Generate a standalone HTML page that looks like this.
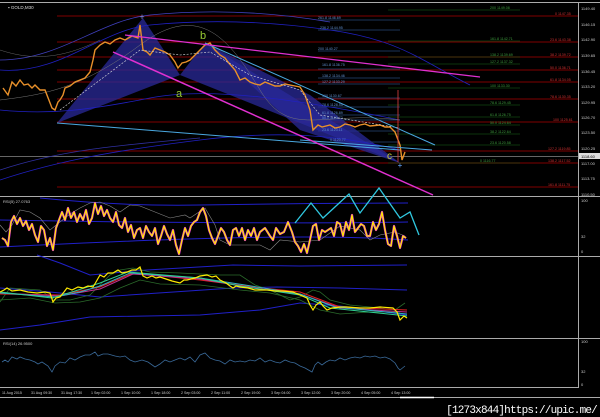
<!DOCTYPE html>
<html><head><meta charset="utf-8"><style>
body{margin:0;background:#000;width:600px;height:417px;overflow:hidden;font-family:"Liberation Sans",sans-serif}
svg{display:block}
</style></head><body>
<svg width="600" height="417" viewBox="0 0 600 417" xmlns="http://www.w3.org/2000/svg" font-family="Liberation Sans, sans-serif">
<rect width="600" height="417" fill="#000"/>
<g stroke="#aaa" stroke-width="1" fill="none">
<line x1="0" y1="2.5" x2="600" y2="2.5"/>
<line x1="578.5" y1="2" x2="578.5" y2="388"/>
<line x1="0" y1="196.5" x2="600" y2="196.5"/>
<line x1="0" y1="256.5" x2="600" y2="256.5"/>
<line x1="0" y1="338.5" x2="600" y2="338.5"/>
<line x1="0" y1="387.5" x2="578" y2="387.5"/>
<line x1="0" y1="397.5" x2="600" y2="397.5"/>
</g>
<line x1="400" y1="397.5" x2="434" y2="397.5" stroke="#fff" stroke-width="1.5"/>
<line x1="0" y1="156.5" x2="578" y2="156.5" stroke="#888" stroke-width="0.7"/>
<text x="8" y="9" fill="#ddd" font-size="4.5">▪ GOLD,M30</text>
<g stroke="#a00" stroke-width="0.8">
<line x1="57" y1="16" x2="578" y2="16"/><line x1="57" y1="42" x2="578" y2="42"/>
<line x1="57" y1="57" x2="578" y2="57"/><line x1="57" y1="70" x2="578" y2="70"/>
<line x1="57" y1="82" x2="578" y2="82"/><line x1="57" y1="99" x2="578" y2="99"/>
<line x1="57" y1="122" x2="578" y2="122"/><line x1="57" y1="151" x2="578" y2="151"/>
<line x1="57" y1="163" x2="578" y2="163"/><line x1="57" y1="187" x2="578" y2="187"/>
</g>
<g stroke="#1a6a1a" stroke-width="0.6">
<line x1="388" y1="10" x2="520" y2="10"/><line x1="388" y1="41" x2="520" y2="41"/>
<line x1="388" y1="57" x2="520" y2="57"/><line x1="388" y1="64" x2="520" y2="64"/>
<line x1="388" y1="88" x2="520" y2="88"/><line x1="388" y1="105" x2="520" y2="105"/>
<line x1="388" y1="117" x2="520" y2="117"/><line x1="388" y1="125" x2="520" y2="125"/>
<line x1="388" y1="134" x2="520" y2="134"/><line x1="388" y1="145" x2="520" y2="145"/>
<line x1="388" y1="163" x2="520" y2="163"/>
</g>
<g stroke="#3a6ab0" stroke-width="0.6">
<line x1="318" y1="20" x2="400" y2="20"/><line x1="318" y1="30" x2="400" y2="30"/>
<line x1="318" y1="51" x2="400" y2="51"/><line x1="318" y1="69" x2="400" y2="69"/>
<line x1="318" y1="78" x2="400" y2="78"/><line x1="318" y1="84" x2="400" y2="84"/>
<line x1="318" y1="98" x2="400" y2="98"/><line x1="318" y1="107" x2="400" y2="107"/>
<line x1="318" y1="115" x2="400" y2="115"/><line x1="318" y1="120" x2="400" y2="120"/>
<line x1="318" y1="131" x2="400" y2="131"/><line x1="318" y1="142" x2="400" y2="142"/>
</g>
<g fill="#2a2a9a" fill-opacity="0.75">
<polygon points="57,123 143,18 180,75"/>
<polygon points="180,75 205,43 400,163"/>
<polygon points="205,43 310,95 400,163 300,130"/>
</g>
<g fill="none" stroke-width="0.8">
<path d="M0,70 C60,75 100,30 150,25 S260,20 330,30 S420,60 470,85" stroke="#2020c0"/>
<path d="M0,60 C60,60 100,20 150,15 S260,10 330,22" stroke="#4040c0"/>
<path d="M0,110 C50,115 90,110 150,98 S300,100 400,120" stroke="#2020c0"/>
<path d="M0,180 C60,160 120,150 200,140 S340,135 400,150" stroke="#2020c0"/>
<path d="M0,170 C60,150 120,145 200,138" stroke="#3030a0"/>
<path d="M0,50 C30,60 60,60 100,40" stroke="#666" stroke-width="0.5"/>
<path d="M0,100 C40,95 80,90 140,45 S230,40 260,90 S320,110 400,120" stroke="#777" stroke-width="0.5"/>
</g>
<polyline fill="none" stroke="#e8902a" stroke-width="1.4" points="3,88 8,95 12,82 16,86 20,80 24,85 28,84 32,88 35,85 40,90 45,90 52,108 55,110 58,102 60,100 63,95 65,88 70,86 75,82 80,80 85,78 90,72 93,60 95,50 100,45 105,42 110,44 115,40 120,38 125,40 132,36 138,38 140,25 143,50 147,52 150,55 155,48 160,50 165,52 170,55 175,62 178,68 182,63 186,62 190,60 195,55 200,50 205,45 210,43 215,50 220,55 225,58 228,62 235,70 240,80 245,78 250,82 255,84 260,85 265,82 270,84 275,86 280,86 285,84 290,85 295,86 300,87 305,95 310,110 313,130 318,125 322,127 330,125 335,128 340,127 345,124 350,125 355,127 360,125 365,124 370,126 380,125 385,127 390,127 395,132 400,145 402,160 405,152"/>
<polyline fill="none" stroke="#ddd" stroke-width="0.6" stroke-dasharray="2,1.5" points="60,110 100,80 140,50 180,55 210,52 250,75 300,90 320,115 400,128"/>
<g stroke-width="1">
<line x1="57" y1="123" x2="400" y2="150" stroke="#4aa8e0"/>
<line x1="205" y1="43" x2="435" y2="145" stroke="#4aa8e0"/>
<line x1="300" y1="140" x2="432" y2="150" stroke="#4aa8e0"/>
<line x1="113" y1="52" x2="433" y2="195" stroke="#e030d0" stroke-width="1.5"/>
<line x1="125" y1="35" x2="480" y2="77" stroke="#e030d0" stroke-width="1.3"/>
<line x1="398" y1="90" x2="398" y2="162" stroke="#e04040" stroke-width="0.8"/>
</g>
<text x="142" y="20" fill="#88c" font-size="9" text-anchor="middle">+</text>
<text x="200" y="39" fill="#9c3" font-size="11">b</text>
<text x="176" y="97" fill="#9c3" font-size="11">a</text>
<text x="387" y="159" fill="#cc3" font-size="10">c</text>
<text x="400" y="168" fill="#6af" font-size="8" text-anchor="middle">+</text>
<g font-size="3.6" fill="#3c9a3c">
<text x="490" y="9">200 1149.08</text><text x="490" y="40">161.8 1142.71</text>
<text x="490" y="56">138.2 1139.69</text><text x="490" y="63">127.2 1137.32</text>
<text x="490" y="87">100 1133.30</text><text x="490" y="104">78.6 1129.45</text>
<text x="490" y="116">61.8 1126.75</text><text x="490" y="124">50.0 1124.64</text>
<text x="490" y="133">38.2 1122.64</text><text x="490" y="144">23.6 1120.58</text>
<text x="480" y="162">0 1116.77</text>
</g>
<g font-size="3.6" fill="#6090d0">
<text x="318" y="19">261.8 1146.69</text><text x="320" y="29">236.2 1144.95</text>
<text x="318" y="50">200 1140.27</text><text x="322" y="66">161.8 1136.75</text>
<text x="322" y="77">138.2 1134.46</text><text x="322" y="83">127.2 1133.29</text>
<text x="322" y="97">100 1130.67</text><text x="322" y="106">78.6 1128.55</text>
<text x="322" y="114">61.8 1126.89</text><text x="322" y="119">50.0 1125.72</text>
<text x="322" y="131">23.6 1123.11</text><text x="330" y="141">0 1120.77</text>
</g>
<g font-size="3.6" fill="#d03030">
<text x="555" y="15">0 1147.35</text><text x="550" y="41">23.6 1143.38</text>
<text x="550" y="56">38.2 1139.72</text><text x="550" y="69">50.0 1136.71</text>
<text x="550" y="81">61.8 1134.05</text><text x="550" y="98">78.6 1130.35</text>
<text x="553" y="121">100 1125.61</text><text x="548" y="150">127.2 1119.85</text>
<text x="548" y="162">138.2 1117.52</text><text x="548" y="186">161.8 1111.75</text>
</g>
<g font-size="4" fill="#ccc">
<text x="581" y="10">1149.40</text><text x="581" y="26">1146.15</text>
<text x="581" y="41">1142.90</text><text x="581" y="57">1139.65</text>
<text x="581" y="73">1136.45</text><text x="581" y="88">1133.20</text>
<text x="581" y="104">1129.95</text><text x="581" y="119">1126.70</text>
<text x="581" y="134">1123.50</text><text x="581" y="150">1120.25</text>
<text x="581" y="165">1117.00</text><text x="581" y="180">1113.75</text>
<text x="581" y="196">1110.50</text>
<text x="581" y="202">100</text><text x="581" y="238">32</text><text x="581" y="253">0</text>
<text x="581" y="343">100</text><text x="581" y="373">32</text><text x="581" y="386">0</text>
</g>
<rect x="579" y="153" width="21" height="6" fill="#ddd"/>
<text x="581" y="158" font-size="4" fill="#000">1118.60</text>
<!-- RSI panel -->
<text x="3" y="203" fill="#ccc" font-size="4">RSI(5) 27.0763</text>
<g fill="none" stroke="#2020c8" stroke-width="1">
<path d="M40,198 C100,204 150,206 200,205 S350,203 408,203"/>
<path d="M0,220 C100,222 300,224 408,222"/>
<path d="M0,247 C100,242 300,232 408,240"/>
</g>
<polyline fill="none" stroke="#888" stroke-width="0.6" points="0,225 6,232 12,225 20,210 30,212 40,218 50,230 60,222 70,214 80,208 90,203 100,202 110,206 120,212 130,205 140,206 150,210 170,218 185,215 190,218 205,208 215,225 220,240 230,245 240,245 260,245 270,250 280,240 300,242 320,240 340,226 360,230 370,240 380,235 395,232 405,236"/>
<g fill="none" stroke-linejoin="round">
<polyline id="rsi" stroke="#e030e0" stroke-width="2.2" points="2,238 5,240 8,246 11,222 14,216 17,224 20,218 23,226 26,221 29,230 32,224 35,235 38,242 41,226 44,230 47,246 50,238 53,250 56,228 59,220 62,212 65,220 68,208 71,218 74,212 77,222 80,214 83,220 86,210 89,224 92,218 95,203 98,214 101,206 104,216 107,210 110,218 113,222 116,212 119,225 122,228 125,218 128,232 131,225 134,238 137,230 140,228 143,238 146,226 149,232 152,236 155,228 158,244 161,236 164,226 167,234 170,240 173,230 176,245 179,254 182,240 185,228 188,236 191,226 194,222 197,220 200,212 203,208 206,216 209,230 212,238 215,244 218,236 221,228 224,232 227,240 230,245 233,230 236,228 239,236 242,228 245,240 248,230 251,236 254,228 257,240 260,232 265,228 270,236 273,240 276,228 280,234 284,232 288,222 292,232 295,242 298,246 301,252 304,244 307,253 310,240 313,226 316,224 319,240 322,230 325,232 328,230 331,228 334,236 337,222 340,224 343,236 346,222 349,230 352,215 355,232 358,228 361,224 364,226 367,236 370,236 373,222 376,230 379,224 382,212 385,230 388,244 391,246 394,226 397,236 400,248 403,236 406,238"/>
<polyline stroke="#ffea00" stroke-width="1.2" points="2,238 5,240 8,246 11,222 14,216 17,224 20,218 23,226 26,221 29,230 32,224 35,235 38,242 41,226 44,230 47,246 50,238 53,250 56,228 59,220 62,212 65,220 68,208 71,218 74,212 77,222 80,214 83,220 86,210 89,224 92,218 95,203 98,214 101,206 104,216 107,210 110,218 113,222 116,212 119,225 122,228 125,218 128,232 131,225 134,238 137,230 140,228 143,238 146,226 149,232 152,236 155,228 158,244 161,236 164,226 167,234 170,240 173,230 176,245 179,254 182,240 185,228 188,236 191,226 194,222 197,220 200,212 203,208 206,216 209,230 212,238 215,244 218,236 221,228 224,232 227,240 230,245 233,230 236,228 239,236 242,228 245,240 248,230 251,236 254,228 257,240 260,232 265,228 270,236 273,240 276,228 280,234 284,232 288,222 292,232 295,242 298,246 301,252 304,244 307,253 310,240 313,226 316,224 319,240 322,230 325,232 328,230 331,228 334,236 337,222 340,224 343,236 346,222 349,230 352,215 355,232 358,228 361,224 364,226 367,236 370,236 373,222 376,230 379,224 382,212 385,230 388,244 391,246 394,226 397,236 400,248 403,236 406,238"/>
</g>
<polyline fill="none" stroke="#30c8e0" stroke-width="1.3" points="295,223 311,203 323,218 349,194 360,213 379,188 400,218 410,212 419,235"/>
<!-- middle panel -->
<g fill="none" stroke="#2020c8" stroke-width="1">
<polyline points="37,255 60,263 90,275 147,270 233,265 300,266 407,265"/>
<polyline points="0,288 50,292 100,297 233,288 277,287 340,288 407,290"/>
<polyline points="0,330 40,325 90,317 200,315 260,310 300,303 340,306 407,315"/>
</g>
<g fill="none" stroke-width="0.8">
<polyline stroke="#2a6a2a" points="0,302 10,288 40,290 55,300 70,300 90,295 100,285 110,275 120,270 133,268 150,272 180,273 220,275 240,275 255,285 270,290 290,300 300,297 313,290 320,292 330,300 350,305 380,308 395,310 405,303"/>
<polyline stroke="#2a6a2a" points="0,300 30,298 55,303 80,302 100,298 120,288 140,280 160,284 200,285 240,290 270,293 300,300 320,310 340,314 370,312 400,312"/>
</g>
<g fill="none" stroke-width="1">
<polyline stroke="#e02020" points="0,294 60,295 100,287 133,273 200,280 253,287 300,292 340,307 407,310"/>
<polyline stroke="#c03090" points="0,293 60,296 100,289 133,274 200,279 253,288 300,294 340,308 407,312"/>
<polyline stroke="#30b0c0" points="0,293 55,297 80,292 100,286 130,273 200,278 245,285 300,294 335,307 407,314"/>
<polyline stroke="#30d090" points="0,292 52,298 75,291 100,283 128,272 200,278 240,286 300,295 330,308 407,316"/>
</g>
<polyline fill="none" stroke="#ffea00" stroke-width="1.2" points="0,292 4,290 7,288 12,291 20,290 28,292 37,293 45,292 50,293 53,302 56,298 60,297 64,292 67,288 72,290 78,287 83,288 88,286 93,287 96,282 100,275 104,277 108,273 113,273 118,270 122,273 127,272 132,270 136,270 140,267 143,276 147,278 152,276 156,278 160,277 166,279 172,281 180,283 184,280 187,280 195,278 200,276 207,275 212,277 216,276 220,280 226,283 230,286 233,288 236,286 240,287 248,288 255,290 260,290 268,290 275,291 283,291 293,292 300,295 307,298 310,305 313,310 316,305 320,302 323,306 327,310 332,308 340,307 347,307 360,308 370,308 380,307 393,308 397,312 400,320 404,316 407,318"/>
<!-- RSI14 -->
<text x="3" y="345" fill="#ccc" font-size="4">RSI(14) 26.9500</text>
<polyline fill="none" stroke="#3a6a9a" stroke-width="0.8" points="2,362 5,360 8,362 12,357 17,359 20,357 25,359 30,360 35,362 38,364 42,362 48,366 52,372 55,366 60,362 65,363 70,358 75,360 80,357 85,355 90,355 95,352 98,356 103,354 108,354 115,356 120,357 125,356 130,360 135,362 142,360 148,362 155,367 160,364 165,360 170,362 175,360 180,358 185,360 190,357 195,362 200,355 205,353 210,358 215,360 220,361 225,364 230,360 235,362 240,361 245,362 250,360 255,361 260,358 265,362 270,360 275,362 280,363 285,360 290,362 295,363 300,366 305,368 312,372 315,365 318,362 322,365 326,362 330,360 335,361 340,358 345,360 350,358 355,357 360,358 365,356 370,357 375,356 380,358 385,357 390,359 395,363 398,368 400,370 405,366"/>
<g font-size="3.6" fill="#ccc">
<text x="2" y="394">11 Aug 2015</text><text x="31" y="394">31 Aug 09:30</text>
<text x="61" y="394">31 Aug 17:30</text><text x="91" y="394">1 Sep 02:00</text>
<text x="121" y="394">1 Sep 10:00</text><text x="151" y="394">1 Sep 18:00</text>
<text x="181" y="394">2 Sep 03:00</text><text x="211" y="394">2 Sep 11:00</text>
<text x="241" y="394">2 Sep 19:00</text><text x="271" y="394">3 Sep 04:00</text>
<text x="301" y="394">3 Sep 12:00</text><text x="331" y="394">3 Sep 20:00</text>
<text x="361" y="394">4 Sep 05:00</text><text x="391" y="394">4 Sep 13:00</text>
</g>
<text x="597" y="413" fill="#fff" font-size="11" text-anchor="end" font-family="Liberation Mono, monospace" letter-spacing="-0.8">[1273x844]https://upic.me/</text>
</svg>
</body></html>
